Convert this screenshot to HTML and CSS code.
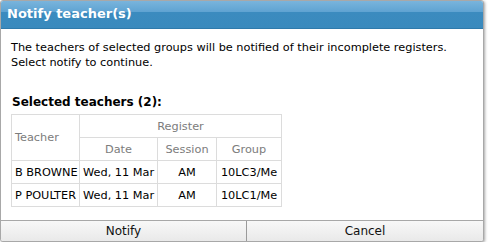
FILE: index.html
```html
<!DOCTYPE html>
<html lang="en">
<head>
    <meta charset="UTF-8">
    <title>Notify teacher(s)</title>
    <link rel="stylesheet" href="styles.css">
</head>
<body>
    <div class="dialog">
        <div class="dialog-title">Notify teacher(s)</div>
        <div class="dialog-body">
            <p class="message">The teachers of selected groups will be notified of their incomplete registers.<br>Select notify to continue.</p>
            <h2 class="list-title">Selected teachers (2):</h2>
            <table class="teachers">
                <colgroup>
                    <col class="col-teacher">
                    <col class="col-date">
                    <col class="col-session">
                    <col class="col-group">
                </colgroup>
                <thead>
                    <tr>
                        <th rowspan="2" class="th-teacher">Teacher</th>
                        <th colspan="3">Register</th>
                    </tr>
                    <tr>
                        <th>Date</th>
                        <th>Session</th>
                        <th>Group</th>
                    </tr>
                </thead>
                <tbody>
                    <tr>
                        <td class="name">B BROWNE</td>
                        <td>Wed, 11 Mar</td>
                        <td>AM</td>
                        <td>10LC3/Me</td>
                    </tr>
                    <tr>
                        <td class="name">P POULTER</td>
                        <td>Wed, 11 Mar</td>
                        <td>AM</td>
                        <td>10LC1/Me</td>
                    </tr>
                </tbody>
            </table>
        </div>
        <div class="dialog-buttons">
            <button class="btn-notify">Notify</button>
            <button class="btn-cancel">Cancel</button>
        </div>
    </div>
</body>
</html>
```

FILE: styles.css
```css
body {
    margin: 0;
    font-family: "DejaVu Sans", Verdana, sans-serif;
    font-size: 11.3px;
    color: #000;
    background: #fff;
}
.dialog {
    width: 482px;
    height: 240px;
    border: 1px solid #a8a8a8;
    border-radius: 3px;
    box-shadow: 1px 1px 3px rgba(0,0,0,0.35);
    display: flex;
    flex-direction: column;
    overflow: hidden;
    background: #fff;
}
.dialog-title {
    height: 27px;
    line-height: 26px;
    padding-left: 6px;
    color: #fff;
    font-weight: bold;
    font-size: 13px;
    background: linear-gradient(#79b4dc 0%, #5fa3d2 40%, #3b8bbf 42%, #3a8abd 100%);
    border-bottom: 1px solid #2f7aab;
}
.dialog-body {
    flex: 1;
    padding: 11px 10px 0 10px;
}
.message {
    margin: 0;
    line-height: 15px;
}
.list-title {
    margin: 25px 0 5px 1px;
    font-size: 12px;
    font-weight: bold;
}
.teachers {
    border-collapse: collapse;
    table-layout: fixed;
    width: 270px;
    text-align: center;
    white-space: nowrap;
}
.col-teacher {
    width: 68px;
}
.col-date {
    width: 78px;
}
.col-session {
    width: 59px;
}
.col-group {
    width: 65px;
}
.teachers th, .teachers td {
    border: 1px solid #dcdcdc;
    height: 22px;
    padding: 0 3px;
    overflow: hidden;
}
.teachers th {
    font-weight: normal;
    color: #7c7c7c;
}
.teachers .th-teacher, .teachers td.name {
    text-align: left;
}
.dialog-buttons {
    display: flex;
    height: 20px;
    border-top: 1px solid #a8a8a8;
}
.dialog-buttons button {
    margin: 0;
    border: none;
    font-family: inherit;
    font-size: 12px;
    color: #111;
    background: linear-gradient(#f8f8f8, #e9e9e9);
    padding: 0;
}
.dialog-buttons .btn-notify {
    width: 245px;
}
.dialog-buttons .btn-cancel {
    flex: 1;
    border-left: 1px solid #9a9a9a;
}
```
